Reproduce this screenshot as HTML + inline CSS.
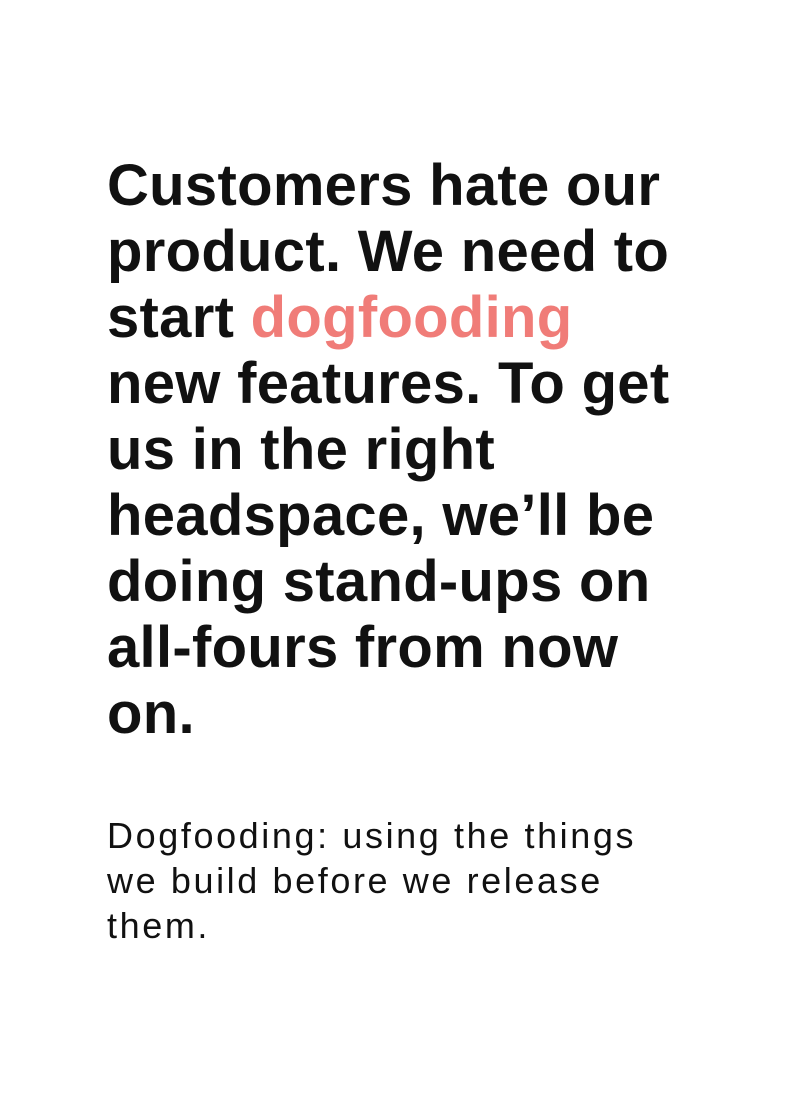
<!DOCTYPE html>
<html><head><meta charset="utf-8"><style>
html,body{margin:0;padding:0;background:#fff;width:795px;height:1095px;overflow:hidden}
.h{position:absolute;left:107px;top:153px;font-family:"Liberation Sans",sans-serif;font-weight:bold;font-size:58px;line-height:66px;color:#111;white-space:nowrap;letter-spacing:0.3px}
.h span{color:#f07c78}
.s{position:absolute;left:107px;top:813px;font-family:"Liberation Sans",sans-serif;font-size:36px;line-height:45px;color:#111;white-space:nowrap;letter-spacing:2.6px}
</style></head><body>
<div class="h">Customers hate our<br>product. We need to<br>start <span>dogfooding</span><br>new features. To get<br>us in the right<br>headspace, we’ll be<br>doing stand-ups on<br>all-fours from now<br>on.</div>
<div class="s">Dogfooding: using the things<br>we build before we release<br>them.</div>
</body></html>
